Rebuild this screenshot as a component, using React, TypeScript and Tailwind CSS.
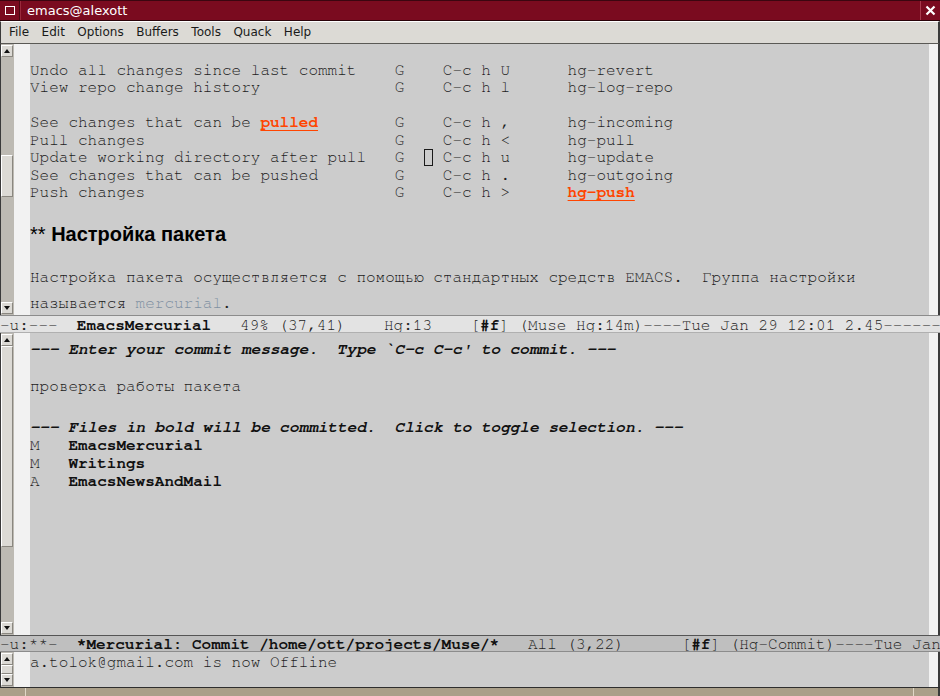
import React from "react";

function Arrow({ up }: { up: boolean }) {
  return (
    <div className="h-[12px] w-[12px] shrink-0 bg-[#dcdad5] border border-t-[#ffffff] border-l-[#ffffff] border-b-[#8a8780] border-r-[#8a8780] flex items-center justify-center">
      <svg width="6" height="4" viewBox="0 0 6 4">
        <path d={up ? "M0 4 L3 0 L6 4Z" : "M0 0 L3 4 L6 0Z"} fill="#111" />
      </svg>
    </div>
  );
}

function Thumb({ h }: { h: number }) {
  return (
    <div
      className="w-[12px] shrink-0 bg-[#dcdad5] border border-t-[#ffffff] border-l-[#ffffff] border-b-[#8a8780] border-r-[#8a8780]"
      style={{ height: h }}
    />
  );
}

function Scroll({ before, thumb, tight }: { before: number; thumb: number; tight?: boolean }) {
  return (
    <div className="w-[14px] shrink-0 flex">
      <div className="w-[1px] bg-[#3a3a3a]" />
      <div className="w-[13px] bg-[#bdbab3] flex flex-col pt-[1px] pb-[1px]">
        <Arrow up />
        <div className="shrink-0" style={{ height: before }} />
        <Thumb h={thumb} />
        {tight ? <div className="h-[1px]" /> : <div className="flex-1" />}
        <Arrow up={false} />
      </div>
    </div>
  );
}

function Line({ h, children }: { h: number; children?: React.ReactNode }) {
  return (
    <div className="whitespace-pre overflow-hidden" style={{ height: h, lineHeight: `${h}px` }}>
      {children}
    </div>
  );
}

function Window({
  scroll,
  children,
  height,
}: {
  scroll: React.ReactNode;
  children: React.ReactNode;
  height: number;
}) {
  return (
    <div className="flex shrink-0" style={{ height }}>
      {scroll}
      <div className="w-[16px] shrink-0 bg-[#f2f2f2]" />
      <div className="flex-1 bg-[#cccccc] overflow-hidden text-[16px] text-[#1c1c1c] [font-family:'Nimbus_Mono_PS','Nimbus_Mono_L','FreeMono','Courier_New','Liberation_Mono',monospace]">
        {children}
      </div>
      <div className="w-[9px] shrink-0 bg-[#f2f2f2]" />
      <div className="w-[2px] shrink-0 bg-[#3a3a3a]" />
    </div>
  );
}

const L = 17.5;

export default function App() {
  return (
    <div className="w-[940px] h-[696px] overflow-hidden flex flex-col bg-[#cccccc]">
      {/* title bar */}
      <div className="h-[21px] shrink-0 flex bg-[#7a0b1f] border-t border-[#3b0610] border-b border-b-[#2a0208] [font-family:'DejaVu_Sans',sans-serif] text-white">
        <div className="w-[20px] flex items-center justify-center border-r border-[#4a0612]">
          <div className="w-[10px] h-[9px] border-[1.5px] border-white" />
        </div>
        <div className="flex-1 pl-[6px] text-[13px] leading-[19px] border-l border-[#9a2a3c]">emacs@alexott</div>
        <div className="w-[20px] flex items-center justify-center border-l border-[#a83a4c] bg-[#7a0b1f]">
          <svg width="11" height="11" viewBox="0 0 11 11">
            <path d="M1.5 1.5 L9.5 9.5 M9.5 1.5 L1.5 9.5" stroke="#fff" strokeWidth="2.2" />
          </svg>
        </div>
      </div>
      {/* menu bar */}
      <div className="h-[23px] shrink-0 flex bg-[#dcdad5] border-t border-[#ffffff] border-b border-b-[#5a5955] border-r-2 border-r-[#3a3a3a] border-l border-l-[#3a3a3a] [font-family:'DejaVu_Sans',sans-serif] text-[12px] text-[#1a1a1a] leading-[21px] pl-[8px] gap-[12.5px]">
        <span>File</span>
        <span>Edit</span>
        <span>Options</span>
        <span>Buffers</span>
        <span>Tools</span>
        <span>Quack</span>
        <span>Help</span>
      </div>
      {/* upper window */}
      <Window height={271} scroll={<Scroll before={98} thumb={42} />}>
        <Line h={L} />
        <Line h={L}>{"Undo all changes since last commit    G    C-c h U      hg-revert"}</Line>
        <Line h={L}>{"View repo change history              G    C-c h l      hg-log-repo"}</Line>
        <Line h={L} />
        <Line h={L}>
          {"See changes that can be "}
          <span className="font-bold text-[#ff4500] underline decoration-[#ff4500] underline-offset-[3px]">pulled</span>
          {"        G    C-c h ,      hg-incoming"}
        </Line>
        <Line h={L}>{"Pull changes                          G    C-c h <      hg-pull"}</Line>
        <Line h={L}>
          {"Update working directory after pull   G  "}
          <span className="inline-block w-[9.6px] h-[17px] align-middle border-[1.5px] border-[#1a1a1a] -mt-[2px]" />
          {" C-c h u      hg-update"}
        </Line>
        <Line h={L}>{"See changes that can be pushed        G    C-c h .      hg-outgoing"}</Line>
        <Line h={L}>
          {"Push changes                          G    C-c h >      "}
          <span className="font-bold text-[#ff4500] underline decoration-[#ff4500] underline-offset-[3px]">hg-push</span>
        </Line>
        <Line h={L} />
        <div className="h-[31px] leading-[31px] [font-family:'Liberation_Sans',Arial,sans-serif] text-[20px] font-bold text-black whitespace-pre">
          <span className="font-normal">**</span> Настройка пакета
        </div>
        <div className="h-[14px]" />
        <Line h={26}>{"Настройка пакета осуществляется с помощью стандартных средств EMACS.  Группа настройки"}</Line>
        <Line h={26}>
          {"называется "}
          <span className="text-[#7f90a2]">mercurial</span>
          {"."}
        </Line>
      </Window>
      {/* upper mode line */}
      <div className="h-[18px] shrink-0 bg-[#e3e3e3] border-t border-[#8c8c8c] border-b border-b-[#b0b0b0] whitespace-pre overflow-hidden text-[16px] leading-[18px] text-[#222] [font-family:'Nimbus_Mono_PS','Nimbus_Mono_L','FreeMono','Courier_New','Liberation_Mono',monospace]">
        {"-u:---  "}
        <span className="font-bold text-[#111]">EmacsMercurial</span>
        {"   49% (37,41)    Hg:13    ["}
        <span className="font-bold text-[#111]">#f</span>
        {"] (Muse Hg:14m)----Tue Jan 29 12:01 2.45--------"}
      </div>
      {/* lower window */}
      <Window height={302} scroll={<Scroll before={0} thumb={201} />}>
        <Line h={32}>
          <span className="font-bold italic text-[#111]">{"--- Enter your commit message.  Type `C-c C-c' to commit. ---"}</span>
        </Line>
        <div className="h-[8px]" />
        <Line h={26}>{"проверка работы пакета"}</Line>
        <div className="h-[19px]" />
        <Line h={18}>
          <span className="font-bold italic text-[#111]">{"--- Files in bold will be committed.  Click to toggle selection. ---"}</span>
        </Line>
        <Line h={18}>
          {"M   "}
          <span className="font-bold text-[#111]">EmacsMercurial</span>
        </Line>
        <Line h={18}>
          {"M   "}
          <span className="font-bold text-[#111]">Writings</span>
        </Line>
        <Line h={18}>
          {"A   "}
          <span className="font-bold text-[#111]">EmacsNewsAndMail</span>
        </Line>
      </Window>
      {/* lower mode line */}
      <div className="h-[17px] shrink-0 bg-[#bfbfbf] border-t border-[#555] border-b border-b-[#8c8c8c] whitespace-pre overflow-hidden text-[16px] leading-[17px] text-[#222] [font-family:'Nimbus_Mono_PS','Nimbus_Mono_L','FreeMono','Courier_New','Liberation_Mono',monospace]">
        {"-u:**-  "}
        <span className="font-bold text-[#111]">*Mercurial: Commit /home/ott/projects/Muse/*</span>
        {"   All (3,22)      ["}
        <span className="font-bold text-[#111]">#f</span>
        {"] (Hg-Commit)----Tue Jan"}
      </div>
      {/* minibuffer */}
      <Window height={35} scroll={<Scroll before={0} thumb={9} tight />}>
        <Line h={20}>{"a.tolok@gmail.com is now Offline"}</Line>
      </Window>
      {/* bottom band */}
      <div className="h-[9px] shrink-0 flex bg-[#aa9f89] border-t border-[#2e2e2e]">
        <div className="w-[26px] border-r border-[#e0d8c8]" />
        <div className="flex-1 border-r border-[#e0d8c8]" />
        <div className="w-[24px]" />
        <div className="w-[2px] bg-[#3a3a3a]" />
      </div>
    </div>
  );
}
